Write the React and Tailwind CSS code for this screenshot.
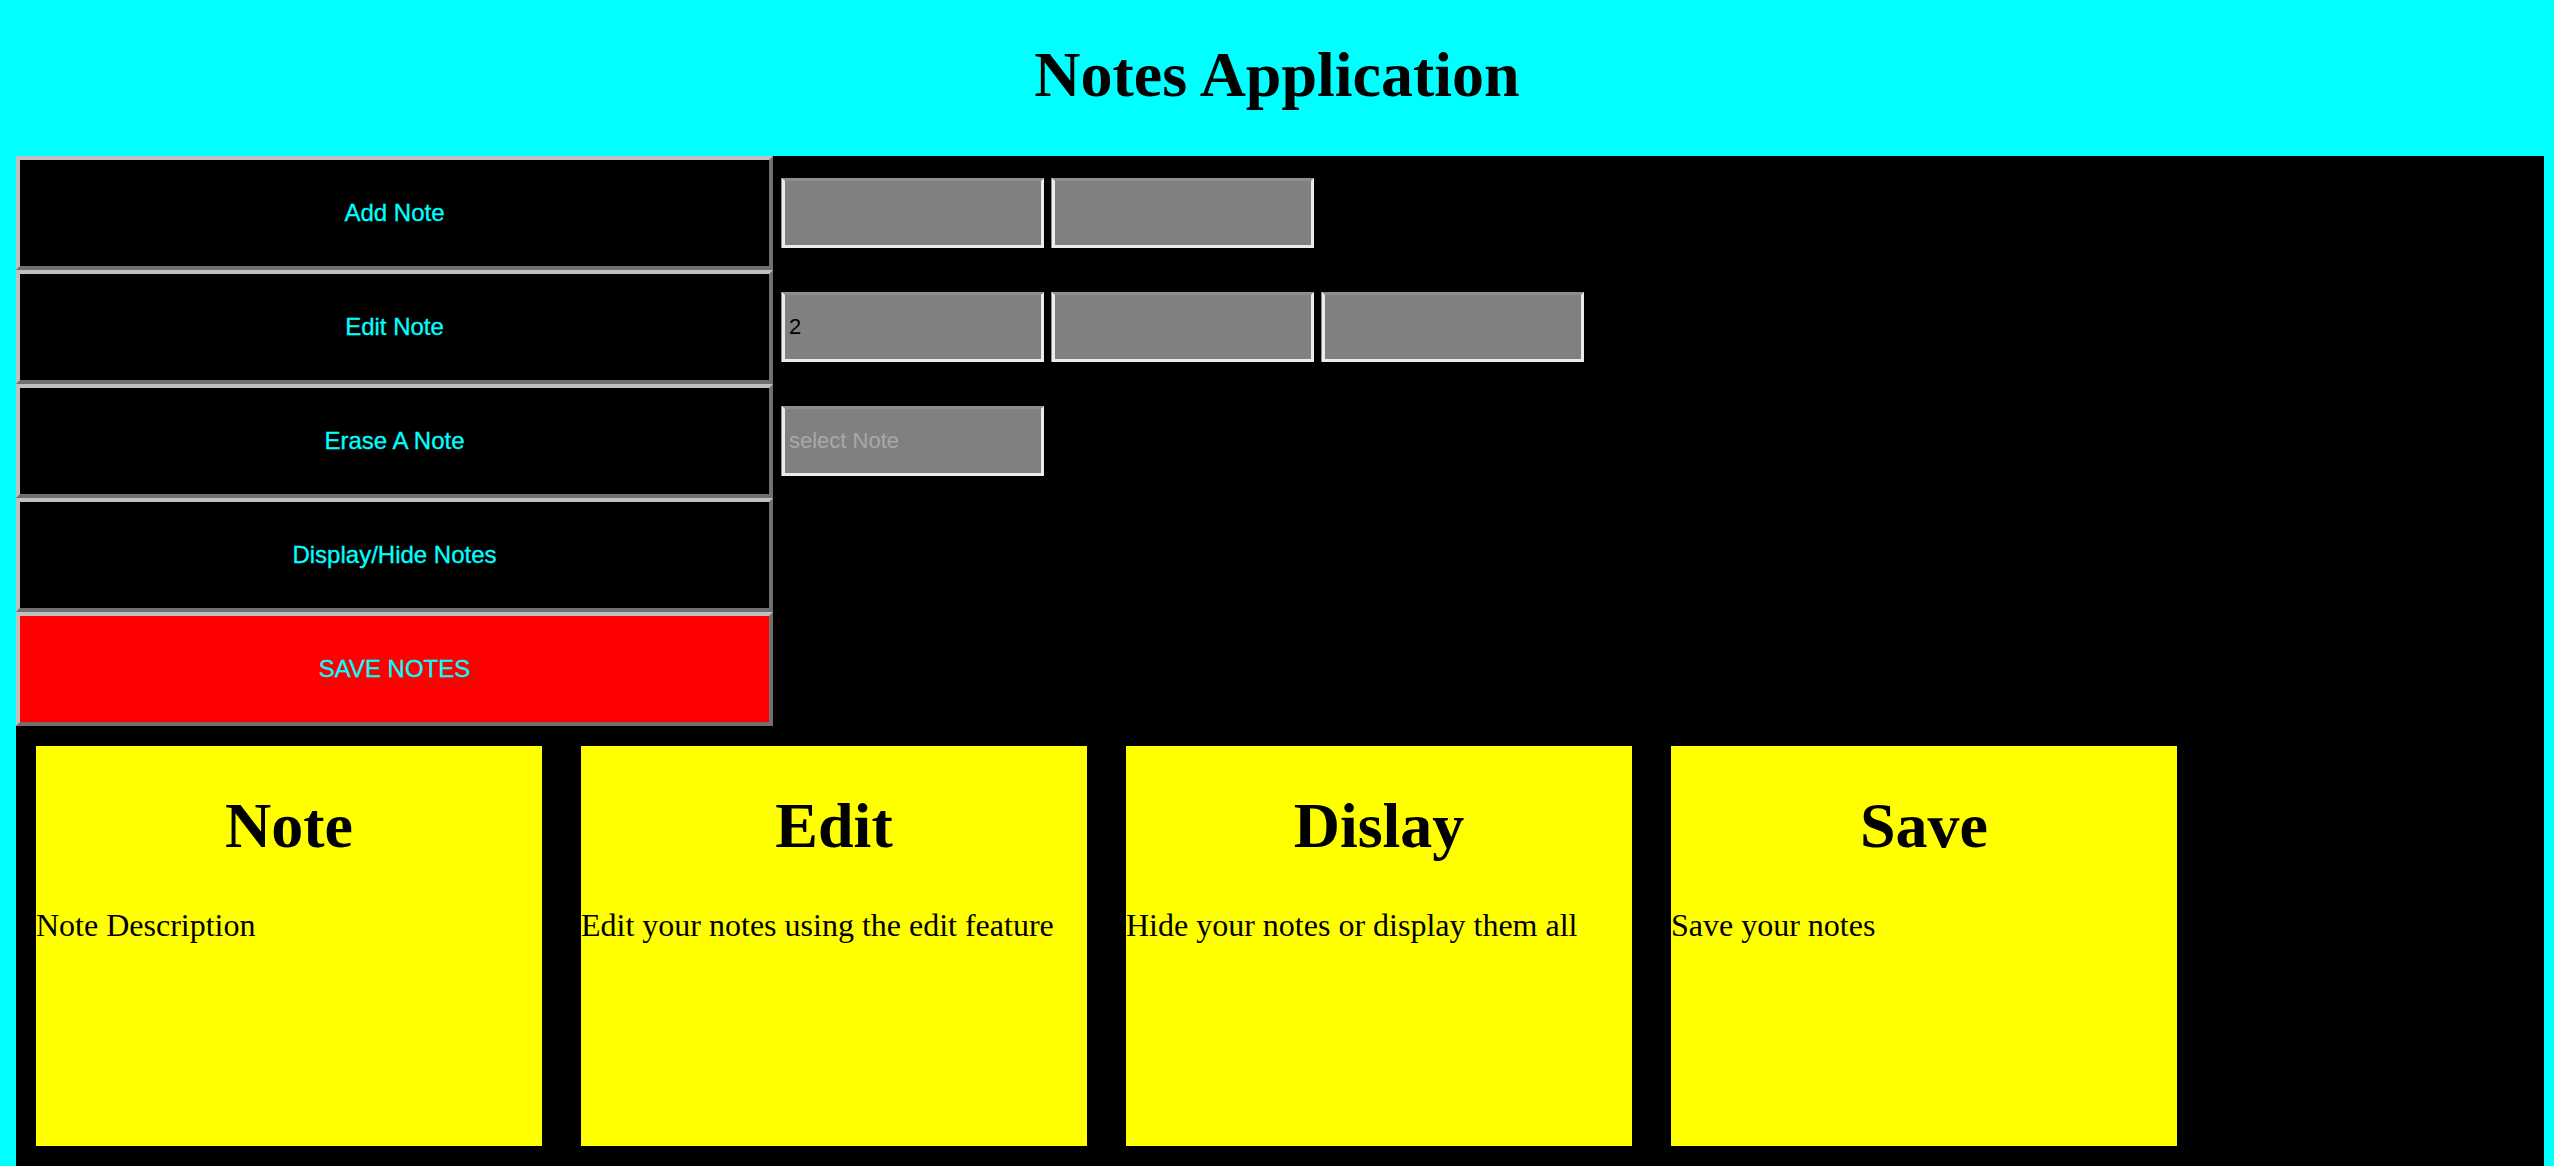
import React from "react";

const serif = "font-['Liberation_Serif','Times_New_Roman',serif]";
const sans = "font-['Liberation_Sans',Arial,sans-serif]";

const buttons = [
  { label: "Add Note", bg: "bg-black" },
  { label: "Edit Note", bg: "bg-black" },
  { label: "Erase A Note", bg: "bg-black" },
  { label: "Display/Hide Notes", bg: "bg-black" },
  { label: "SAVE NOTES", bg: "bg-[#ff0000]" },
];

const cards = [
  { title: "Note", text: "Note Description" },
  { title: "Edit", text: "Edit your notes using the edit feature" },
  { title: "Dislay", text: "Hide your notes or display them all" },
  { title: "Save", text: "Save your notes" },
];

function Field({ value, placeholder }) {
  return (
    <input
      readOnly
      defaultValue={value}
      placeholder={placeholder}
      className={`${sans} w-[262px] h-[70px] bg-[#808080] text-black text-[22px] px-1 outline-none border-[3px] border-[#ececec] border-t-[#8e8e8e] shadow-[-1px_0_0_#8e8e8e] placeholder:text-[#a8a8a8]`}
    />
  );
}

export default function App() {
  return (
    <div className="min-h-screen w-full bg-[#00ffff]">
      {/* Header */}
      <header className="h-[156px] pt-[38px]">
        <h1 className={`${serif} text-center font-bold text-[64px] leading-[74px] text-black`}>
          Notes Application
        </h1>
      </header>

      <div className="ml-4 mr-[10px] bg-black">
        <div className="flex">
          {/* Action buttons */}
          <div className="flex flex-col w-[757px]">
            {buttons.map((b) => (
              <button
                key={b.label}
                className={`${sans} ${b.bg} h-[114px] w-full text-[#00ffff] text-[24px] [-webkit-text-stroke:0.3px_#00ffff] border-4 border-t-[#c0c0c0] border-l-[#c0c0c0] border-b-[#707070] border-r-[#707070]`}
              >
                {b.label}
              </button>
            ))}
          </div>

          {/* Inputs */}
          <div className="flex flex-col pl-[9px]">
            <div className="h-[114px] flex items-center gap-2">
              <Field />
              <Field />
            </div>
            <div className="h-[114px] flex items-center gap-2">
              <Field value="2" />
              <Field />
              <Field />
            </div>
            <div className="h-[114px] flex items-center gap-2">
              <Field placeholder="select Note" />
            </div>
          </div>
        </div>

        {/* Cards */}
        <div className="flex gap-[39px] p-5">
          {cards.map((c) => (
            <div key={c.title} className={`${serif} w-[506px] h-[400px] bg-[#ffff00] text-black flex flex-col`}>
              <h2 className="text-center font-bold text-[64px] leading-[74px] mt-[43px]">{c.title}</h2>
              <p className="text-[32px] leading-[37px] mt-[44px]">{c.text}</p>
            </div>
          ))}
        </div>
      </div>
    </div>
  );
}
